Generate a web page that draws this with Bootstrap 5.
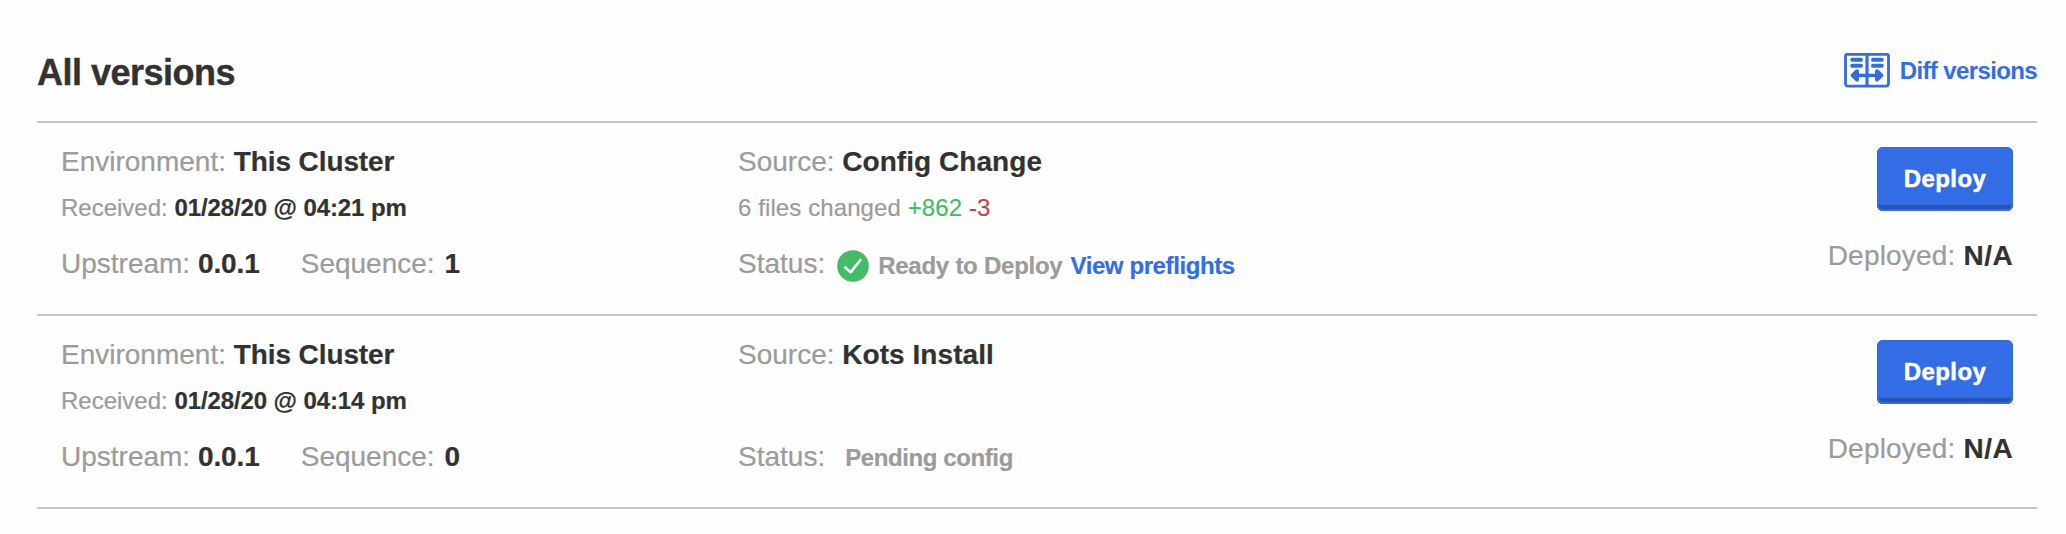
<!DOCTYPE html>
<html lang="en">
<head>
<meta charset="utf-8">
<meta name="viewport" content="width=device-width, initial-scale=1">
<title>All versions</title>
<link href="https://cdn.jsdelivr.net/npm/bootstrap@5.3.0/dist/css/bootstrap.min.css" rel="stylesheet">
<style>
  body { font-family: "Liberation Sans", Arial, sans-serif; background: #fefefe; color: #323232; }
  .versions { padding: 0 29px 0 37px; }
  .versions-head { height: 121px; padding-top: 53px; }
  .versions-title { font-size: 36px; line-height: 40px; letter-spacing: -.5px; -webkit-text-stroke: .4px currentColor; }
  .blue-link { color: #326de6; text-decoration: none; }
  .diff-link { font-size: 24px; line-height: 28px; letter-spacing: -.62px; gap: 10px; font-weight: 700; }
  .version-row { height: 193px; border-top: 2px solid #c4c8ca; padding: 24px 24px 0; }
  .version-row:last-child { height: 195px; border-bottom: 2px solid #c4c8ca; }
  .version-row b { letter-spacing: -.1px; }
  .version-row .source b { letter-spacing: .05px; }
  .release-col { width: 677px; }
  .line-lg { font-size: 28px; line-height: 30px; height: 30px; white-space: nowrap; -webkit-text-stroke: .2px currentColor; }
  .line-sm { font-size: 24px; line-height: 28px; height: 28px; margin: 17px 0 27px; white-space: nowrap; -webkit-text-stroke: .2px currentColor; }
  .muted-label { color: #9b9b9b; }
  .files-changed { letter-spacing: .1px; }
  .added { color: #44bb66; }
  .removed { color: #bc4752; }
  .sequence { margin-left: 41px; }
  .sequence b { padding-left: 2px; }
  .status-text { font-size: 24px; line-height: 28px; font-weight: 700; letter-spacing: -.4px; }
  .status-text.ready { letter-spacing: -.25px; }
  .status-icon { margin: 4px 9px 0 12px; }
  .btn-deploy { width: 136px; height: 64px; padding: 0 0 1px; border: 0; border-radius: 6px; background: #326de6;
    color: #fff; font-size: 24px; font-weight: 700; letter-spacing: .4px; -webkit-text-stroke: .5px #fff;
    box-shadow: inset 0 -2px 0 #326de6, inset 2px 0 0 #326de6, inset -2px 0 0 #326de6, inset 0 -6px 0 #2853af; }
  .btn-deploy:hover { background: #326de6; color: #fff; }
  .deployed { margin-top: 30px; letter-spacing: .2px; }
  .version-row .deployed b { letter-spacing: .4px; }
</style>
</head>
<body>
<main class="versions">
  <header class="versions-head d-flex justify-content-between align-items-start">
    <h1 class="versions-title fw-bold mb-0">All versions</h1>
    <a href="#" class="diff-link blue-link d-flex align-items-center">
      <svg width="46" height="35" viewBox="0 0 46 35" fill="none" stroke="#326de6">
        <path d="M3 1.3H43Q44.5 1.3 44.5 3V30.5Q44.5 33.2 41.8 33.2H4.2Q1.5 33.2 1.5 30.5V3Q1.5 1.3 3 1.3Z" stroke-width="2.8"/>
        <path d="M23 1V33" stroke-width="3.2"/>
        <path d="M8.2 6.7H17M8.2 12.7H17M29 6.7H37.8M29 12.7H37.8" stroke-width="4" stroke-linecap="round"/>
        <path d="M9 22.4H37" stroke-width="3.4"/>
        <path d="M13 18.2L8.6 22.4L13 26.6ZM33 18.2L37.4 22.4L33 26.6Z" fill="#326de6" stroke-width="4" stroke-linejoin="round"/>
      </svg>
      <span>Diff versions</span>
    </a>
  </header>

  <section class="version-row d-flex">
    <div class="release-col flex-shrink-0">
      <div class="line-lg"><span class="muted-label">Environment:</span> <b>This Cluster</b></div>
      <div class="line-sm"><span class="muted-label">Received:</span> <b>01/28/20 @ 04:21 pm</b></div>
      <div class="line-lg d-flex">
        <div><span class="muted-label">Upstream:</span> <b>0.0.1</b></div>
        <div class="sequence"><span class="muted-label">Sequence:</span> <b>1</b></div>
      </div>
    </div>
    <div class="flex-grow-1">
      <div class="line-lg source"><span class="muted-label">Source:</span> <b>Config Change</b></div>
      <div class="line-sm files-changed"><span class="muted-label">6 files changed</span> <span class="added">+862</span> <span class="removed">-3</span></div>
      <div class="line-lg d-flex align-items-center">
        <span class="muted-label">Status:</span>
        <svg class="status-icon flex-shrink-0" width="32" height="32" viewBox="0 0 32 32">
          <circle cx="16" cy="16" r="15.8" fill="#44bb66"/>
          <path d="M8.3 17.5L13.6 22.4L23.4 10" fill="none" stroke="#fff" stroke-width="2.6" stroke-linecap="round" stroke-linejoin="round"/>
        </svg>
        <span class="status-text ready muted-label mt-1">Ready to Deploy</span>
        <a href="#" class="status-text blue-link ms-2 ps-0 mt-1">View preflights</a>
      </div>
    </div>
    <div class="text-end">
      <button type="button" class="btn btn-deploy">Deploy</button>
      <div class="line-lg deployed"><span class="muted-label">Deployed:</span> <b>N/A</b></div>
    </div>
  </section>

  <section class="version-row d-flex">
    <div class="release-col flex-shrink-0">
      <div class="line-lg"><span class="muted-label">Environment:</span> <b>This Cluster</b></div>
      <div class="line-sm"><span class="muted-label">Received:</span> <b>01/28/20 @ 04:14 pm</b></div>
      <div class="line-lg d-flex">
        <div><span class="muted-label">Upstream:</span> <b>0.0.1</b></div>
        <div class="sequence"><span class="muted-label">Sequence:</span> <b>0</b></div>
      </div>
    </div>
    <div class="flex-grow-1">
      <div class="line-lg source"><span class="muted-label">Source:</span> <b>Kots Install</b></div>
      <div class="line-sm"></div>
      <div class="line-lg d-flex align-items-baseline">
        <span class="muted-label">Status:</span>
        <span class="status-text muted-label ms-3 ps-1">Pending config</span>
      </div>
    </div>
    <div class="text-end">
      <button type="button" class="btn btn-deploy">Deploy</button>
      <div class="line-lg deployed"><span class="muted-label">Deployed:</span> <b>N/A</b></div>
    </div>
  </section>
</main>
<script src="https://cdn.jsdelivr.net/npm/bootstrap@5.3.0/dist/js/bootstrap.bundle.min.js"></script>
</body>
</html>
